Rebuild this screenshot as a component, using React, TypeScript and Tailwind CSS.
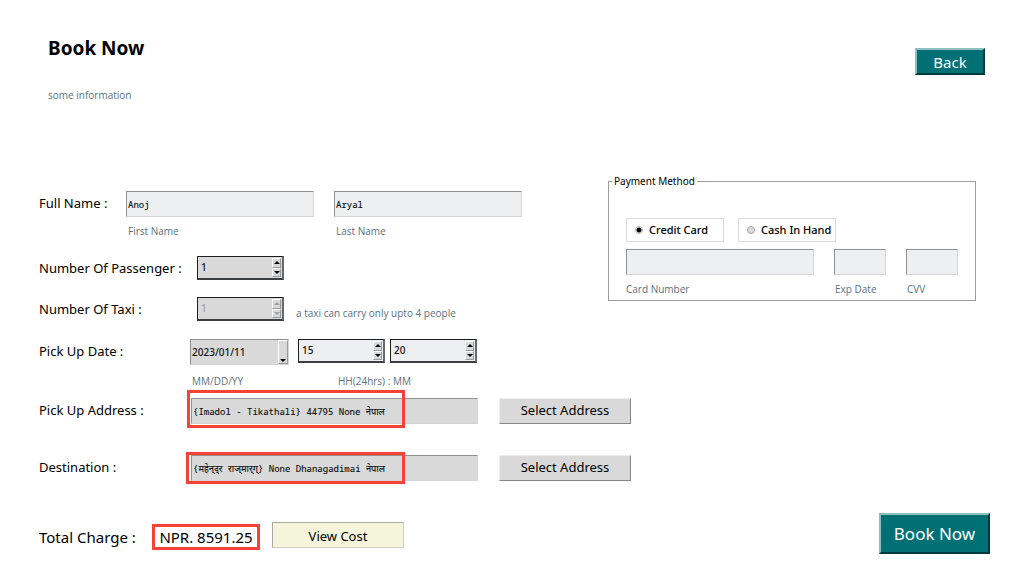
import { useId, useState, type ReactNode } from "react";

const labelText = "shrink-0 whitespace-pre leading-6 font-[450] text-black";
const hint = "block font-['Open_Sans','Noto_Sans',sans-serif] text-[10px] leading-4 whitespace-pre text-[#5b7080]";
const sunken = "h-[26px] border border-t-[#8e9092] border-l-[#8e9092] border-r-[#d4d5d7] border-b-[#d4d5d7] outline-none";
const mono = "font-['Noto_Sans_Mono','DejaVu_Sans_Mono','Noto_Sans',monospace] text-[9px] font-medium text-[#111111]";

function Triangle({ up = false }: { up?: boolean }) {
  return (
    <svg viewBox="0 0 6 3" className="h-[3px] w-1.5 fill-current" aria-hidden="true">
      <path d={up ? "M0 3L3 0L6 3Z" : "M0 0L3 3L6 0Z"} />
    </svg>
  );
}

function Spinner({ label, id, initial, tone, disabled = false }: {
  label?: string; id?: string; initial: number; tone: string; disabled?: boolean;
}) {
  const [value, setValue] = useState(initial);
  const step = `flex flex-1 items-center justify-center border border-t-white border-l-white border-r-[#999999] border-b-[#999999] bg-[#d9d9d9] ${disabled ? "text-[#a3a3a3]" : "text-black"}`;
  return (
    <div className={`flex h-6 w-[87px] shrink-0 border-t border-r-2 border-b-2 border-l border-t-[#1c1c1c] border-l-[#1c1c1c] border-r-[#66696b] border-b-[#3c3e40] p-px ${tone}`}>
      <input
        id={id}
        aria-label={label}
        value={value}
        disabled={disabled}
        inputMode="numeric"
        onChange={(e) => setValue(Number(e.target.value) || 0)}
        className={`min-w-0 flex-1 bg-transparent pl-0.5 text-[10px] font-medium outline-none ${disabled ? "text-[#a3a3a3]" : "text-[#111111]"}`}
      />
      <div className="flex w-[9px] flex-col">
        <button type="button" aria-label="Increase" disabled={disabled} className={step} onClick={() => setValue(value + 1)}>
          <Triangle up />
        </button>
        <button type="button" aria-label="Decrease" disabled={disabled} className={step} onClick={() => setValue(value - 1)}>
          <Triangle />
        </button>
      </div>
    </div>
  );
}

function TextField({ label, value = "", width, inset = "pl-0.5" }: { label: string; value?: string; width: string; inset?: string }) {
  const id = useId();
  return (
    <div className={`flex flex-col gap-1.5 ${width}`}>
      <input id={id} defaultValue={value} className={`w-full bg-[#eeeff1] pl-px ${sunken} ${mono}`} />
      <label htmlFor={id} className={`${hint} ${inset}`}>{label}</label>
    </div>
  );
}

function PaymentOption({ children, checked = false }: { children: ReactNode; checked?: boolean }) {
  return (
    <label className="flex h-6 w-[98px] items-center gap-1.5 border border-[#dcdcdc] pl-2 text-[11px] font-medium whitespace-nowrap text-black">
      <input
        type="radio"
        name="payment"
        defaultChecked={checked}
        className="size-2 shrink-0 appearance-none rounded-full border border-[#a8a8a8] bg-[#dadada] checked:border-[#b5b5b5] checked:bg-[radial-gradient(circle,#000_0_2px,#fff_3px)]"
      />
      {children}
    </label>
  );
}

function AddressRow({ label, value, frame }: { label: string; value: string; frame: string }) {
  const id = useId();
  return (
    <div className="flex items-start">
      <label htmlFor={id} className={`${labelText} w-[152px] text-[13px]`}>{label}</label>
      <div className="relative flex w-[287px]">
        <input id={id} readOnly defaultValue={value} className={`w-full bg-[#d9d9d9] pl-px ${sunken} ${mono}`} />
        <span className={`pointer-events-none absolute border-3 border-[#f44336] ${frame}`} />
      </div>
      <button type="button" className="ml-[21px] h-[26px] w-[132px] border border-t-[#ececec] border-l-[#ececec] border-r-[#858585] border-b-[#858585] bg-[#d9d9d9] text-[13px] font-[450] text-black">
        Select Address
      </button>
    </div>
  );
}

const teal = "border-2 border-t-[#8cc0c0] border-l-[#8cc0c0] border-r-[#003a3c] border-b-[#003a3c] bg-[#007075] text-white";

export default function App() {
  return (
    <main className="min-h-screen bg-white pr-[26px] pb-4 pl-[39px] font-['Noto_Sans',sans-serif]">
      <header className="flex items-start justify-between pr-[5px] pl-[9px]">
        <div className="pt-[34px]">
          <h1 className="text-[19px] leading-7 font-bold text-black">Book Now</h1>
          <p className={`${hint} mt-[25px]`}>some information</p>
        </div>
        <button type="button" className={`mt-12 h-[27px] w-[70px] text-[15px] leading-5 ${teal}`}>Back</button>
      </header>

      <form onSubmit={(e) => e.preventDefault()}>
        <div className="mt-[71px] flex items-start justify-between pr-3.5">
          <div className="flex flex-col gap-[17px] pt-[17px]">
            <div className="flex items-start">
              <span className={`${labelText} w-[87px] text-[13px]`}>Full Name :</span>
              <div className="flex gap-5">
                <TextField label="First Name" value="Anoj" width="w-[188px]" />
                <TextField label="Last Name" value="Aryal" width="w-[188px]" />
              </div>
            </div>
            <div className="flex items-center">
              <label htmlFor="passengers" className={`${labelText} w-[158px] text-[13px]`}>Number Of Passenger :</label>
              <Spinner id="passengers" initial={1} tone="bg-[#d9d9d9]" />
            </div>
            <div className="flex items-center">
              <label htmlFor="taxis" className={`${labelText} w-[158px] text-[13px]`}>Number Of Taxi :</label>
              <Spinner id="taxis" initial={1} tone="bg-[#d9d9d9]" disabled />
              <span className={`${hint} ml-3 pt-2`}>a taxi can carry only upto 4 people</span>
            </div>
          </div>

          <fieldset className="w-[368px] border border-[#9c9da0] px-[3px] pb-[3px]">
            <legend className="px-0.5 text-[10px] leading-[15px] font-[450] text-black">Payment Method</legend>
            <div className="px-3.5 pt-[29px]">
              <div className="flex gap-3.5">
                <PaymentOption checked>Credit Card</PaymentOption>
                <PaymentOption>Cash In Hand</PaymentOption>
              </div>
              <div className="mt-[7px] flex gap-5">
                <TextField label="Card Number" width="w-[188px]" inset="pl-0" />
                <TextField label="Exp Date" width="w-[52px]" inset="pl-px" />
                <TextField label="CVV" width="w-[52px]" inset="pl-px" />
              </div>
            </div>
          </fieldset>
        </div>

        <div className="mt-[18px] flex items-start">
          <label htmlFor="date" className={`${labelText} w-[151px] text-[13px]`}>Pick Up Date :</label>
          <div className="flex w-[99px] flex-col gap-2">
            <div className={`flex bg-[#d9d9d9] ${sunken}`}>
              <input id="date" defaultValue="2023/01/11" className="min-w-0 flex-1 bg-transparent pl-px text-[10px] font-medium text-[#111111] outline-none" />
              <button type="button" aria-label="Open calendar" className="flex w-2.5 items-end justify-center border border-t-white border-l-white border-r-[#999999] border-b-[#999999] pb-px text-black">
                <Triangle />
              </button>
            </div>
            <span className={`${hint} pl-0.5`}>MM/DD/YY</span>
          </div>
          <div className="ml-[9px] flex flex-col gap-2.5">
            <div className="flex gap-[5px]">
              <Spinner label="Hour" initial={15} tone="bg-[#eeeff1]" />
              <Spinner label="Minute" initial={20} tone="bg-[#eeeff1]" />
            </div>
            <span className={`${hint} pl-10`}>HH(24hrs) : MM</span>
          </div>
        </div>

        <div className="mt-[9px] flex flex-col gap-[31px]">
          <AddressRow label="Pick Up Address :" value="{Imadol - Tikathali} 44795 None नेपाल" frame="-top-2 -bottom-1 -left-1 w-[218px]" />
          <AddressRow label="Destination :" value={"{महेन्\u200Cद्\u200Cर राज्\u200Cमार्\u200Cग्} None Dhanagadimai नेपाल"} frame="-top-[3px] -bottom-[3px] -left-[5px] w-[219px]" />
        </div>

        <div className="mt-8 flex items-start justify-between">
          <div className="flex items-start pt-[9px]">
            <div className="flex items-center pt-0.5">
              <span className={`${labelText} w-[113px] text-[15px]`}>Total Charge :</span>
              <output className="flex h-[26px] w-[108px] items-center justify-center border-3 border-[#f44336] text-[15px] font-[450] whitespace-nowrap text-black">NPR. 8591.25</output>
            </div>
            <button type="button" className="ml-3 h-[26px] w-[132px] border border-t-[#a8a8a0] border-l-[#a8a8a0] border-r-[#cfcfc8] border-b-[#cfcfc8] bg-[#f5f5dc] pt-1 text-[13px] font-[450] text-black">
              View Cost
            </button>
          </div>
          <button type="submit" className={`h-[41px] w-[111px] text-[17px] leading-6 ${teal}`}>Book Now</button>
        </div>
      </form>
    </main>
  );
}
